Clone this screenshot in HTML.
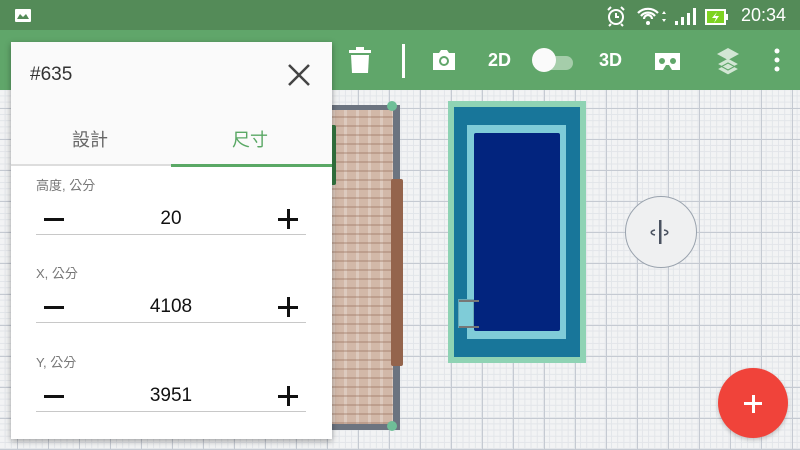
<!DOCTYPE html>
<html><head><meta charset="utf-8"><style>
*{margin:0;padding:0;box-sizing:border-box}
body{width:800px;height:450px;overflow:hidden;position:relative;font-family:"Liberation Sans","Noto Sans CJK TC",sans-serif;
background-color:#f2f3f4;
background-image:linear-gradient(#c5cad2 1px,transparent 1px),linear-gradient(90deg,#c5cad2 1px,transparent 1px),linear-gradient(#e2e5e9 1px,transparent 1px),linear-gradient(90deg,#e2e5e9 1px,transparent 1px);
background-size:31px 31px,31px 31px,6.2px 6.2px,6.2px 6.2px;background-position:17px 15px,17px 15px,17px 15px,17px 15px}
.abs{position:absolute}
#status{left:0;top:0;width:800px;height:30px;background:#548b58;color:#fff}
#tool{left:0;top:30px;width:800px;height:60px;background:#60a66a}
.tb{color:#fff;font-weight:bold;font-size:18px}
#panel{left:11px;top:42px;width:321px;height:397px;background:#fff;box-shadow:0 2px 6px rgba(0,0,0,.35)}
.lbl{font-size:13px;color:#777;position:absolute;left:25px}
.row{position:absolute;left:25px;width:270px;height:31px;border-bottom:1.5px solid #c8c8c8}
.row .v{position:absolute;left:0;width:270px;text-align:center;top:4px;font-size:19px;color:#111}
.row .m{position:absolute;left:8px;top:14px;width:20px;height:2.5px;background:#111}
.row .p1{position:absolute;left:242px;top:14px;width:20px;height:2.5px;background:#111}
.row .p2{position:absolute;left:251px;top:5px;width:2.5px;height:20px;background:#111}
</style></head><body>
<div id="status" class="abs">
 <div class="abs" style="left:15px;top:9px;width:16px;height:13px;background:#fff;border-radius:1px"><div class="abs" style="left:2px;top:5px;width:12px;height:5px;background:#548b58;clip-path:polygon(0 100%,25% 0,50% 60%,75% 0,100% 100%)"></div></div>
 <svg class="abs" style="left:605px;top:5px" width="130" height="22" viewBox="0 0 130 22">
  <circle cx="11" cy="12" r="7" fill="none" stroke="#fff" stroke-width="2"/><path d="M11 8v4h3M3 5l3-3M19 5l-3-3M6 19l-2 2M16 19l2 2" stroke="#fff" stroke-width="2" fill="none"/>
  <path d="M33 8a14 14 0 0 1 20 0M36 11a9 9 0 0 1 14 0M39 14a4 4 0 0 1 8 0" stroke="#fff" stroke-width="2.2" fill="none"/><circle cx="43" cy="18" r="2" fill="#fff"/>
  <path d="M57 9l2-3 2 3zM57 14l2 3 2-3z" fill="#fff"/>
  <rect x="70" y="16" width="3" height="4" fill="#fff"/><rect x="76" y="12" width="3" height="8" fill="#fff"/><rect x="82" y="8" width="3" height="12" fill="#fff"/><rect x="88" y="3" width="3" height="17" fill="#fff"/>
  <rect x="101" y="5" width="19" height="14" fill="#7ed321" stroke="#fff" stroke-width="2"/><rect x="120" y="9" width="3" height="6" fill="#fff"/><path d="M112 7l-5 6h4l-2 5 5-7h-4z" fill="#fff"/>
 </svg>
 <div class="abs" style="left:741px;top:5px;font-size:18px">20:34</div>
</div>
<div id="tool" class="abs">
 <svg class="abs" style="left:345px;top:14px" width="440" height="34" viewBox="0 0 440 34">
  <rect x="4" y="6" width="22" height="3" fill="#fff"/><rect x="11" y="3" width="8" height="3" fill="#fff"/><path d="M6 11h18l-1 18H7z" fill="#fff"/>
  <rect x="57" y="0" width="3" height="34" fill="#fff"/>
  <path d="M88 9h6l2-3h6l2 3h6v17H88z" fill="#fff"/><circle cx="99" cy="17" r="5" fill="#60a66a"/><circle cx="99" cy="17" r="3" fill="#fff"/>
  <rect x="193" y="12" width="35" height="14" rx="7" fill="#a5cdaa"/><circle cx="199" cy="16" r="12" fill="#fafafa"/>
  <path d="M310 9h25v17h-8l-3-5h-3l-3 5h-8z" fill="#fff"/><circle cx="317" cy="17" r="3" fill="#60a66a"/><circle cx="328" cy="17" r="3" fill="#60a66a"/>
  <path d="M383 19l-11 6 11 6 11-6zM383 14l-11 6 11 6 11-6z" fill="#d2e6d4" stroke="#60a66a" stroke-width="1"/><path d="M383 4l-11 6 11 6 11-6z" fill="#d2e6d4"/>
  <circle cx="432" cy="7" r="2.5" fill="#fff"/><circle cx="432" cy="16" r="2.5" fill="#fff"/><circle cx="432" cy="25" r="2.5" fill="#fff"/>
 </svg>
 <div class="abs tb" style="left:488px;top:20px">2D</div>
 <div class="abs tb" style="left:599px;top:20px">3D</div>
</div>
<!-- wall -->
<div class="abs" style="left:330px;top:105px;width:70px;height:325px;background:#6c7480"></div>
<div class="abs" style="left:332px;top:110px;width:61px;height:314px;background-color:#d2b8a8;background-image:repeating-linear-gradient(0deg,rgba(150,110,90,.35) 0 2px,transparent 2px 9px),repeating-linear-gradient(90deg,rgba(255,255,255,.25) 0 3px,transparent 3px 12px)"></div>
<div class="abs" style="left:391px;top:179px;width:12px;height:187px;background:#94644c;border-radius:2px"></div>
<div class="abs" style="left:387px;top:101px;width:10px;height:10px;border-radius:50%;background:#6fbf98"></div>
<div class="abs" style="left:387px;top:421px;width:10px;height:10px;border-radius:50%;background:#6fbf98"></div>
<!-- pool -->
<div class="abs" style="left:448px;top:101px;width:138px;height:262px;background:#8fd3b4"></div>
<div class="abs" style="left:454px;top:107px;width:126px;height:250px;background:#18769a"></div>
<div class="abs" style="left:467px;top:125px;width:99px;height:214px;background:#7fccd8"></div>
<div class="abs" style="left:474px;top:133px;width:86px;height:198px;background:#02247e;border-radius:2px"></div>
<div class="abs" style="left:458px;top:299px;width:16px;height:29px;background:#7fccd8;border:1px solid #6aaab6"></div>
<div class="abs" style="left:459px;top:300px;width:20px;height:2px;background:#777"></div>
<div class="abs" style="left:459px;top:326px;width:20px;height:2px;background:#777"></div>
<!-- rotate -->
<div class="abs" style="left:625px;top:196px;width:72px;height:72px;border-radius:50%;background:#eff0f1;border:1.5px solid #9aa3ae"></div>
<svg class="abs" style="left:645px;top:218px" width="30" height="30" viewBox="0 0 30 30"><rect x="14" y="2" width="2.5" height="24" fill="#4a5260"/><path d="M10 12c-5 1-5 4 0 5M19 12c5 1 5 4 0 5" stroke="#4a5260" stroke-width="1.6" fill="none"/></svg>
<!-- fab -->
<div class="abs" style="left:718px;top:368px;width:70px;height:70px;border-radius:50%;background:#f0433a;box-shadow:0 2px 4px rgba(0,0,0,.2)"></div>
<div class="abs" style="left:744px;top:402px;width:18px;height:3px;background:#fff"></div>
<div class="abs" style="left:751.5px;top:394.5px;width:3px;height:18px;background:#fff"></div>
<!-- panel -->
<div id="panel" class="abs">
 <div class="abs" style="left:0;top:0;width:321px;height:124px;background:#fafafa"></div>
 <div class="abs" style="left:19px;top:22px;font-size:19px;color:#333">#635</div>
 <svg class="abs" style="left:276px;top:21px" width="24" height="24"><path d="M2 2L22 22M22 2L2 22" stroke="#444" stroke-width="2.5"/></svg>
 <div class="abs" style="left:61px;top:84px;font-size:18px;color:#666">設計</div>
 <div class="abs" style="left:221px;top:84px;font-size:18px;color:#5aa865">尺寸</div>
 <div class="abs" style="left:0;top:122px;width:321px;height:2px;background:#ddd"></div>
 <div class="abs" style="left:160px;top:122px;width:161px;height:3px;background:#5aa865"></div>
 <div class="lbl" style="top:133px">高度, 公分</div>
 <div class="row" style="top:162px"><div class="m"></div><div class="v">20</div><div class="p1"></div><div class="p2"></div></div>
 <div class="lbl" style="top:221px">X, 公分</div>
 <div class="row" style="top:250px"><div class="m"></div><div class="v">4108</div><div class="p1"></div><div class="p2"></div></div>
 <div class="lbl" style="top:310px">Y, 公分</div>
 <div class="row" style="top:339px"><div class="m"></div><div class="v">3951</div><div class="p1"></div><div class="p2"></div></div>
</div>
<div class="abs" style="left:332px;top:125px;width:4px;height:60px;background:#2e6b3a;border-radius:0 2px 2px 0"></div>
</body></html>
